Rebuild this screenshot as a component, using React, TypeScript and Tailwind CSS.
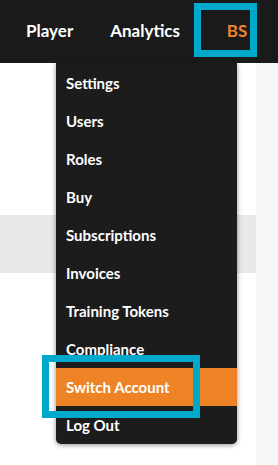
import React from "react";

const items = [
  "Settings",
  "Users",
  "Roles",
  "Buy",
  "Subscriptions",
  "Invoices",
  "Training Tokens",
  "Compliance",
  "Switch Account",
  "Log Out",
];

export default function App() {
  return (
    <div
      className="relative w-[278px] h-[465px] overflow-hidden bg-white"
      style={{ fontFamily: "Lato, 'Open Sans', sans-serif" }}
    >
      <header className="h-[63px] bg-[#1a1a1a] flex items-center text-white font-bold text-[17px]">
        <span className="ml-[26px] -mt-[1px]">Player</span>
        <span className="ml-[37px] -mt-[1px]">Analytics</span>
        <span className="ml-[26px] -mt-[1px] text-[#f0832a] w-[62px] text-center">BS</span>
      </header>
      <div className="relative h-[402px] flex">
        <div className="flex-1 flex flex-col">
          <div className="h-[152px]" />
          <div className="h-[58px] bg-[#e8e8e8]" />
        </div>
        <div className="w-[22px] bg-[#f6f6f6]" />
      </div>

      {/* dropdown menu */}
      <div className="absolute left-[56px] top-[63px] w-[181px] bg-[#1c1c1c] rounded-b-[5px] shadow-[0_1px_5px_rgba(0,0,0,0.45)] pt-[1px] text-white font-bold text-[15px]">
        <ul className="flex flex-col">
          {items.map((it) => (
            <li
              key={it}
              className={
                "h-[38px] flex items-center pl-[10px] " +
                (it === "Switch Account" ? "bg-[#ee8326]" : "")
              }
            >
              {it}
            </li>
          ))}
        </ul>
      </div>

      {/* highlight boxes */}
      <div className="absolute left-[194px] top-[3px] w-[63px] h-[54px] border-[7px] border-[#00a8cc]" />
      <div className="absolute left-[42px] top-[355px] w-[158px] h-[63px] border-[7px] border-[#00a8cc]" />
    </div>
  );
}
